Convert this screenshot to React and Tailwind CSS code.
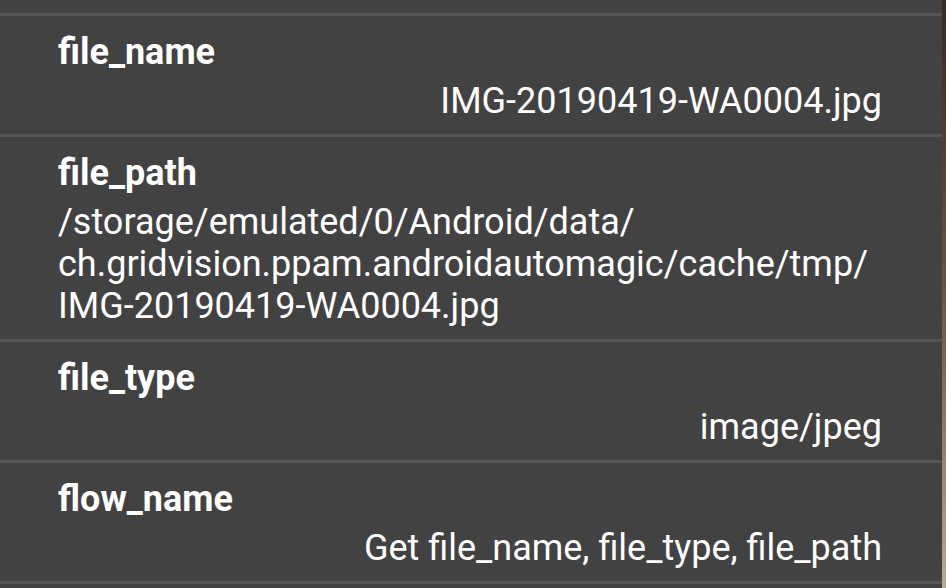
import React from 'react';

const rows = [
  { label: 'file_name', value: ['IMG-20190419-WA0004.jpg'], align: 'right' },
  {
    label: 'file_path',
    value: [
      '/storage/emulated/0/Android/data/',
      'ch.gridvision.ppam.androidautomagic/cache/tmp/',
      'IMG-20190419-WA0004.jpg',
    ],
    align: 'left',
  },
  { label: 'file_type', value: ['image/jpeg'], align: 'right' },
  { label: 'flow_name', value: ['Get file_name, file_type, file_path'], align: 'right' },
];

function Row({ label, value, align }) {
  return (
    <div className="border-t-[3px] border-[#555555] pl-[58px] pr-[60px] pt-[15px] pb-[12px]">
      <div className="text-[36px] leading-[42px] font-bold text-white">{label}</div>
      <div className={`mt-[7px] text-[36px] leading-[42px] text-white whitespace-nowrap ${align === 'right' ? 'text-right' : 'text-left'}`}>
        {value.map((line, i) => (
          <div key={i}>{line}</div>
        ))}
      </div>
    </div>
  );
}

export default function App() {
  return (
    <div className="w-[946px] h-[588px] overflow-hidden flex bg-[#424242]" style={{ fontFamily: 'Roboto, "Liberation Sans", sans-serif' }}>
      <div className="w-[942px] shrink-0 flex flex-col">
        <div className="h-[13px] shrink-0"></div>
        {rows.map((r) => (
          <Row key={r.label} {...r} />
        ))}
        <div className="border-t-[3px] border-[#555555] flex-1"></div>
      </div>
      {/* edge of the photo behind the dialog */}
      <div className="flex-1 bg-gradient-to-b from-[#3a2a22] via-[#6b5548] to-[#b8ab90]"></div>
    </div>
  );
}
